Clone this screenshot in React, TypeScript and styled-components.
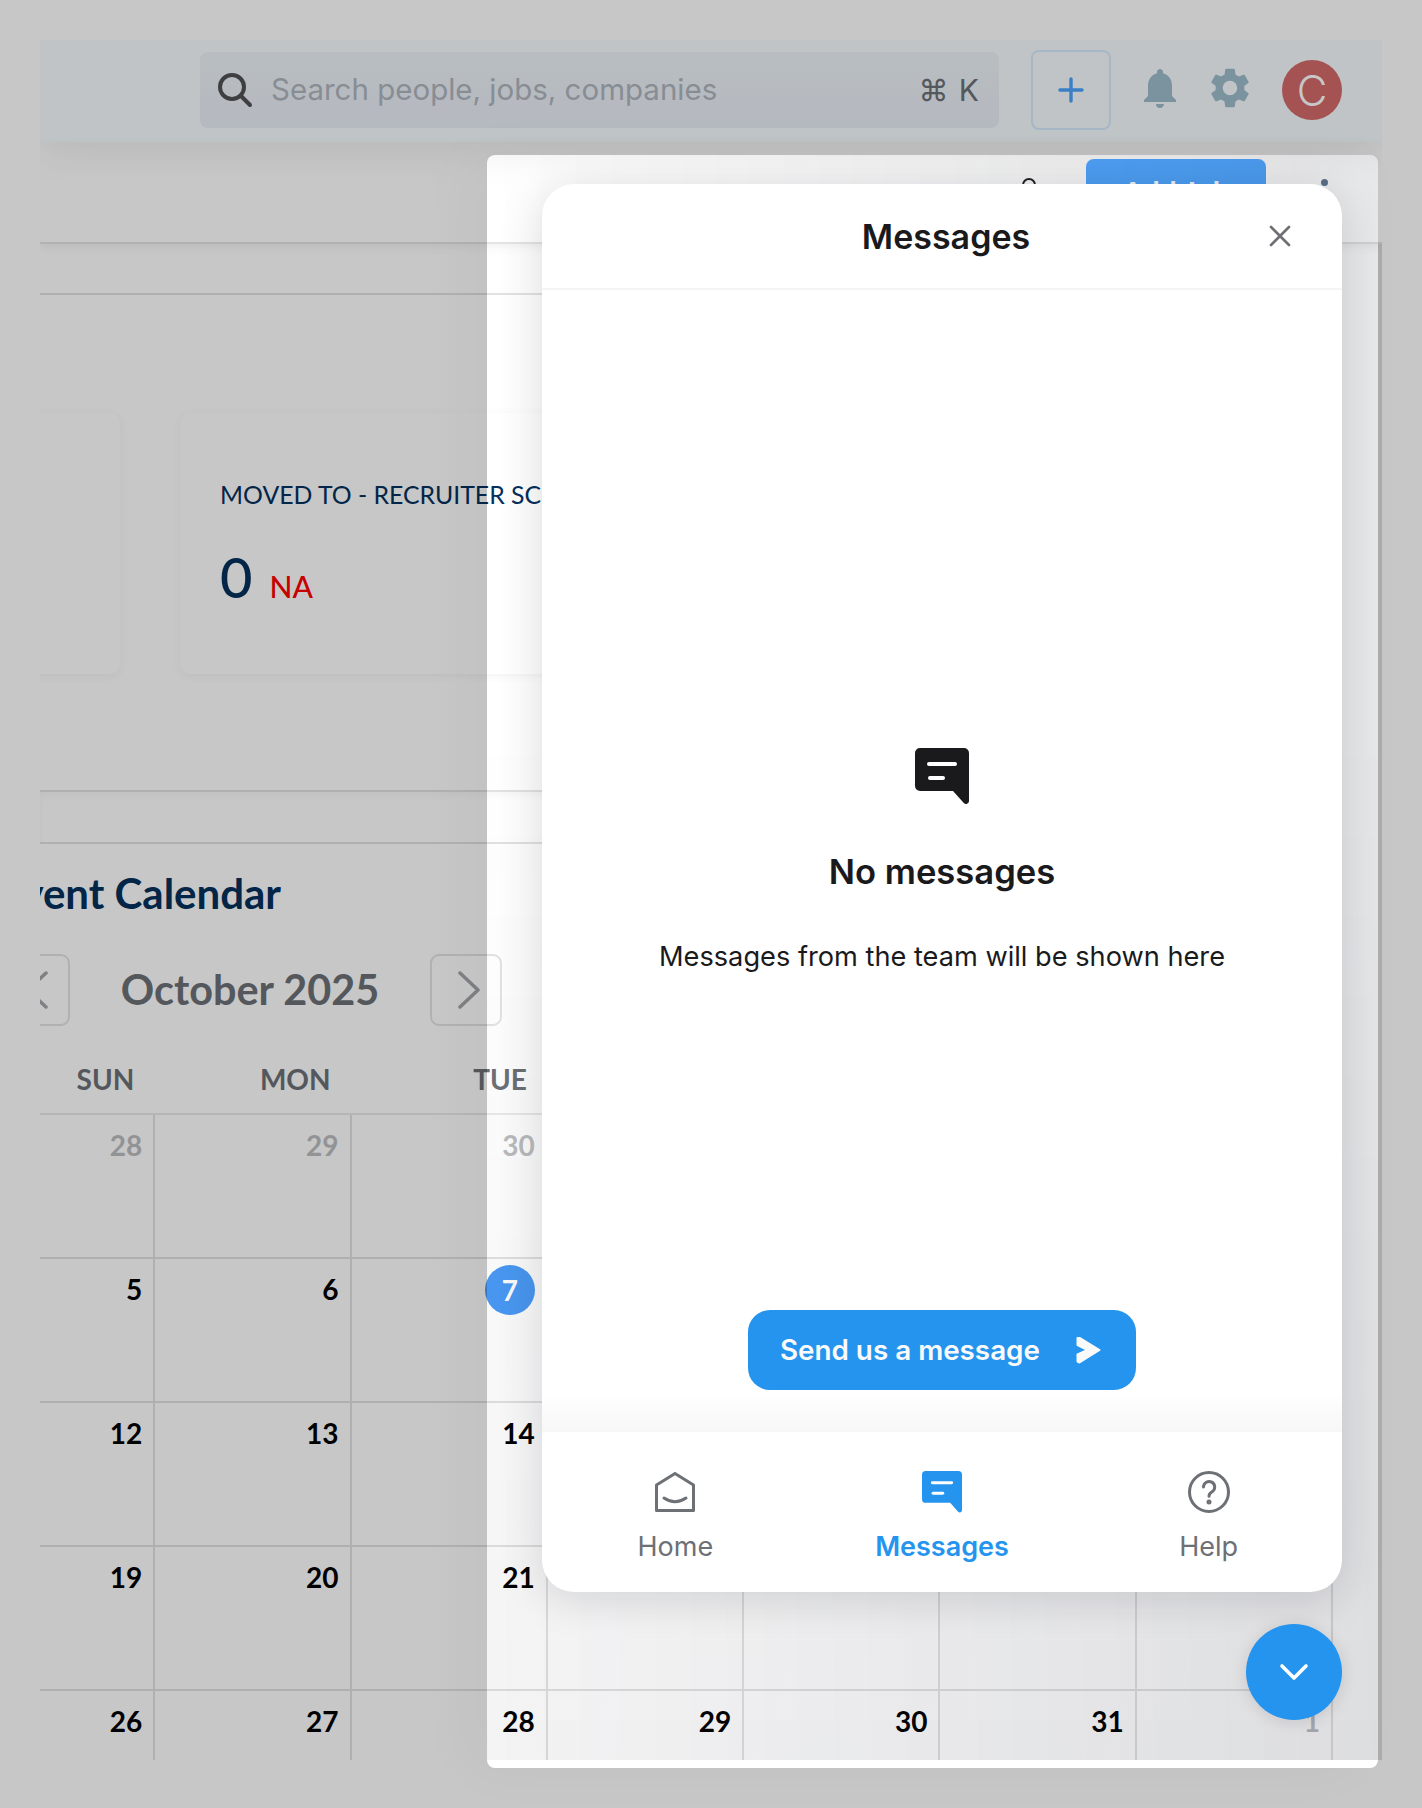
import React from 'react';
import styled, { createGlobalStyle } from 'styled-components';
import { MdNotifications, MdSettings } from 'react-icons/md';

const GlobalStyle = createGlobalStyle`
  html, body {
    margin: 0;
    padding: 0;
    background: #fff;
    overflow: hidden;
  }
`;

const Root = styled.div`
  position: relative;
  width: 1422px;
  height: 1808px;
  overflow: hidden;
  font-family: Lato, "Open Sans", sans-serif;
`;

const Frame = styled.div`
  width: 1342px;
  height: 1720px;
  margin: 40px 0 0 40px;
  overflow: hidden;
  display: flex;
  flex-direction: column;
`;

const TopBar = styled.header`
  position: relative;
  z-index: 2;
  flex: none;
  height: 102px;
  box-sizing: border-box;
  padding: 0 39px 2px 160px;
  display: flex;
  align-items: center;
  background: #f6fcff;
  box-shadow: 0 2px 46px rgba(0, 0, 0, 0.1);
`;

const SearchBox = styled.div`
  width: 799px;
  height: 76px;
  box-sizing: border-box;
  padding: 0 20px 0 17px;
  display: flex;
  align-items: center;
  border-radius: 8px;
  background: linear-gradient(#edf3f8, #e8edf6);
`;

const Placeholder = styled.span`
  flex: 1;
  margin: 0 0 2px 18px;
  font-family: Inter, sans-serif;
  font-size: 29.5px;
  color: #aeb5bd;
`;

const Shortcut = styled.span`
  font-family: Inter, "DejaVu Sans", sans-serif;
  font-size: 30px;
  color: #6c7176;
  word-spacing: 2px;
`;

const PlusButton = styled.button`
  width: 80px;
  height: 80px;
  margin: 0 25px 0 32px;
  padding: 0;
  display: flex;
  align-items: center;
  justify-content: center;
  background: transparent;
  border: 2px solid #d5ecff;
  border-radius: 8px;
`;

const BarIcon = styled.span`
  display: flex;
  margin: 0 22px 4px 0;
  color: #9ebbcc;
`;

const Avatar = styled.div`
  width: 60px;
  height: 60px;
  margin-left: 6px;
  border-radius: 50%;
  background: #d26a6a;
  color: #fff;
  font-size: 42px;
  font-family: Inter, sans-serif;
  font-weight: 300;
  display: flex;
  align-items: center;
  justify-content: center;
`;

const SubHeader = styled.div`
  flex: none;
  height: 102px;
  box-sizing: border-box;
  padding: 17px 58px 0 0;
  display: flex;
  align-items: flex-start;
  justify-content: flex-end;
  border-bottom: 2px solid #e4e4e4;
  box-shadow: 0 3px 10px rgba(0, 0, 0, 0.06);
  position: relative;
  z-index: 3;
`;

const PersonMark = styled.span`
  width: 10px;
  height: 10px;
  margin: 19px 50px 0 0;
  border: 2.5px solid #222;
  border-radius: 50%;
`;

const AddButton = styled.div`
  width: 180px;
  height: 66px;
  margin-right: 55px;
  border-radius: 8px;
  background: #50a6ff;
  color: #fff;
  font-size: 30px;
  font-weight: 700;
  line-height: 66px;
  text-align: center;
`;

const KebabDot = styled.span`
  width: 7px;
  height: 7px;
  margin: 20px -4px 0 0;
  border-radius: 50%;
  background: #5f7890;
`;

const Content = styled.main`
  flex: 1;
  min-height: 0;
  border-right: 4px solid #dedede;
  overflow: hidden;
`;

const TabStrip = styled.div`
  height: 49px;
  margin-right: 60px;
  border-bottom: 2px solid #e2e2e2;
`;

const CardRow = styled.section`
  display: flex;
  gap: 60px;
  margin-left: -240px;
  padding: 118px 0 116px;
`;

const Card = styled.div<{ $wide?: boolean }>`
  flex: none;
  width: ${(p) => (p.$wide ? 460 : 320)}px;
  height: 261px;
  box-sizing: border-box;
  padding: 66px 0 0 40px;
  border-radius: 10px;
  background: #fff;
  box-shadow: 0 2px 10px rgba(0, 0, 0, 0.05);
  white-space: nowrap;
`;

const CardTitle = styled.div`
  font-size: 24.8px;
  line-height: 32px;
  color: #05305c;
`;

const CardValue = styled.div`
  margin-top: 32px;
  display: flex;
  align-items: baseline;
  gap: 17px;
  font-size: 56px;
  line-height: 68px;
  font-weight: 500;
  color: #05305c;
`;

const CardDelta = styled.span`
  font-size: 30px;
  color: #ff0000;
`;

const Divider = styled.div`
  height: 50px;
  margin-right: 60px;
  border-top: 2px solid #e2e2e2;
  border-bottom: 2px solid #e2e2e2;
  box-shadow: inset 0 4px 6px rgba(0, 0, 0, 0.03);
`;

const CalendarTitle = styled.h2`
  margin: 24px 0 0 -42px;
  font-size: 42px;
  line-height: 50px;
  font-weight: 700;
  color: #05305c;
  white-space: nowrap;
`;

const MonthBar = styled.div`
  height: 72px;
  margin: 36px 0 1px -42px;
  display: flex;
  align-items: center;
`;

const NavButton = styled.button`
  flex: none;
  width: 72px;
  height: 72px;
  padding: 0 0 0 5px;
  display: flex;
  align-items: center;
  justify-content: center;
  background: transparent;
  border: 2px solid #e3e3e3;
  border-radius: 9px;
  color: #a2a5a9;
`;

const MonthTitle = styled.div`
  width: 360px;
  padding-bottom: 3px;
  font-size: 41.4px;
  font-weight: 700;
  color: #6c7176;
  text-align: center;
`;

const Calendar = styled.div`
  width: 1374px;
  margin-left: -81px;
`;

const WeekHead = styled.div`
  height: 88px;
  display: grid;
  grid-template-columns: repeat(7, 1fr);
  border-bottom: 2px solid #eaeaea;
  box-sizing: border-box;
`;

const WeekDay = styled.div`
  padding: 35px 21px 0 0;
  font-size: 28px;
  line-height: 34px;
  font-weight: 700;
  color: #6c7176;
  text-align: right;
`;

const Weeks = styled.div`
  display: grid;
  grid-template-columns: repeat(7, 1fr);
  grid-auto-rows: 144px;
`;

const DayCell = styled.div`
  box-sizing: border-box;
  padding: 0 11px 0 0;
  display: flex;
  align-items: flex-start;
  justify-content: flex-end;
  border-right: 2px solid #e2e2e2;
  border-bottom: 2px solid #e2e2e2;
`;

const DayNumber = styled.span<{ $muted?: boolean; $today?: boolean }>`
  font-size: 28px;
  font-weight: 700;
  color: ${(p) => (p.$today ? '#fff' : p.$muted ? '#bcbdbf' : '#000')};
  ${(p) =>
    p.$today
      ? `
    width: 50px;
    height: 50px;
    margin-top: 6px;
    border-radius: 50%;
    background: #4a9af5;
    display: flex;
    align-items: center;
    justify-content: center;
  `
      : `
    margin-top: 10px;
    line-height: 40px;
  `}
`;

const Panel = styled.div`
  position: absolute;
  z-index: 3;
  left: 487px;
  top: 155px;
  width: 891px;
  height: 1613px;
  border-radius: 8px;
  background-image: linear-gradient(90deg, rgba(22, 26, 42, 0) 0%, rgba(22, 26, 42, 0.02) 20%, rgba(22, 26, 42, 0.1) 100%),
    linear-gradient(180deg, rgba(22, 26, 42, 0) 35%, rgba(22, 26, 42, 0.05) 100%);
  background-size: 100% 1605px;
  background-repeat: no-repeat;
  box-shadow: 0 0 0 4000px rgba(0, 0, 0, 0.22), -20px 0 60px rgba(0, 0, 0, 0.03);
`;

const Widget = styled.section`
  position: absolute;
  z-index: 4;
  left: 542px;
  top: 184px;
  width: 800px;
  height: 1408px;
  display: flex;
  flex-direction: column;
  overflow: hidden;
  border-radius: 32px;
  background: #fff;
  box-shadow: 0 6px 46px rgba(9, 14, 21, 0.14);
  font-family: Inter, sans-serif;
  color: #1a1a1d;
`;

const WidgetHeader = styled.header`
  flex: none;
  height: 106px;
  box-sizing: border-box;
  padding: 0 51px 0 56px;
  display: flex;
  align-items: center;
  justify-content: space-between;
  border-bottom: 2px solid #f4f4f4;
`;

const HeaderSpacer = styled.span`
  width: 22px;
`;

const WidgetTitle = styled.h1`
  margin: 0 0 0 3px;
  font-size: 34px;
  font-weight: 600;
`;

const WidgetBody = styled.div`
  flex: 1;
  min-height: 0;
  display: flex;
  flex-direction: column;
`;

const EmptyState = styled.div`
  flex: 1;
  padding-top: 125px;
  box-sizing: border-box;
  display: flex;
  flex-direction: column;
  align-items: center;
  justify-content: center;
`;

const EmptyTitle = styled.h2`
  margin: 44px 0 0;
  font-size: 34.6px;
  line-height: 46px;
  font-weight: 600;
`;

const EmptyText = styled.p`
  margin: 43px 0 0;
  font-size: 27.2px;
  line-height: 40px;
`;

const ActionArea = styled.div`
  flex: none;
  height: 122px;
  display: flex;
  justify-content: center;
  background: linear-gradient(#fff 68%, #f7f7f7 100%);
`;

const SendButton = styled.button`
  width: 388px;
  height: 80px;
  padding: 0 35px 0 32px;
  display: flex;
  align-items: center;
  justify-content: space-between;
  border: 0;
  border-radius: 22px;
  background: #2594ee;
  color: #fafafa;
  font-family: Inter, sans-serif;
  font-size: 27.8px;
  font-weight: 600;
`;

const WidgetNav = styled.nav`
  flex: none;
  height: 160px;
  display: grid;
  grid-template-columns: repeat(3, 1fr);
`;

const NavItem = styled.div<{ $active?: boolean }>`
  padding-top: 39px;
  display: flex;
  flex-direction: column;
  align-items: center;
  gap: 16px;
  font-size: 27px;
  line-height: 36px;
  font-weight: ${(p) => (p.$active ? 600 : 400)};
  color: ${(p) => (p.$active ? '#2594ee' : '#6d7074')};
`;

const NavIcon = styled.span`
  height: 42px;
  display: flex;
  align-items: center;
`;

const Launcher = styled.button`
  position: absolute;
  z-index: 4;
  left: 1246px;
  top: 1624px;
  width: 96px;
  height: 96px;
  padding: 0;
  display: flex;
  align-items: center;
  justify-content: center;
  border: 0;
  border-radius: 50%;
  background: #2594ee;
  box-shadow: 0 2px 16px rgba(9, 14, 21, 0.12);
`;

const prevMonth = [28, 29, 30];
const weeks: number[][] = [
  [28, 29, 30, 1, 2, 3, 4],
  [5, 6, 7, 8, 9, 10, 11],
  [12, 13, 14, 15, 16, 17, 18],
  [19, 20, 21, 22, 23, 24, 25],
  [26, 27, 28, 29, 30, 31, 1],
];
const weekDays = ['SUN', 'MON', 'TUE', 'WED', 'THU', 'FRI', 'SAT'];

const isMuted = (week: number, day: number) =>
  (week === 0 && prevMonth.includes(day)) || (week === 4 && day === 1);

const SearchIcon = () => (
  <svg width="36" height="36" viewBox="0 0 36 36" fill="none" stroke="#4f5153" strokeWidth="4" strokeLinecap="round">
    <circle cx="15" cy="15" r="12" />
    <path d="M24 24 L33 33" />
  </svg>
);

const BubbleIcon = ({ size, color }: { size: number; color: string }) => (
  <svg width={size} height={size * (56 / 54)} viewBox="0 0 54 56">
    <path
      d="M5 0 H49 a5 5 0 0 1 5 5 V53 a3 3 0 0 1 -5.2 2 L38 43 H5 a5 5 0 0 1 -5 -5 V5 a5 5 0 0 1 5 -5 Z"
      fill={color}
    />
    <rect x="12" y="14" width="30" height="4" rx="2" fill="#fff" />
    <rect x="13" y="28" width="17" height="4" rx="2" fill="#fff" />
  </svg>
);

const HomeIcon = () => (
  <svg width="40" height="40" viewBox="0 0 40 40" fill="none" stroke="#6d7074" strokeWidth="3" strokeLinecap="round" strokeLinejoin="round">
    <path d="M20 1.5 L38.5 13 V38.5 H1.5 V13 Z" />
    <path d="M9 26 Q20 33.5 31 26" />
  </svg>
);

const HelpIcon = () => (
  <svg width="42" height="42" viewBox="0 0 42 42" fill="none" stroke="#6d7074" strokeWidth="3" strokeLinecap="round">
    <circle cx="21" cy="21" r="19.5" />
    <path d="M15.5 16 a5.6 5.6 0 1 1 8.6 4.8 c-1.9 1.1 -3.1 2.2 -3.1 4.4" />
    <circle cx="21" cy="31" r="1" fill="#6d7074" />
  </svg>
);

const SendIcon = () => (
  <svg width="25" height="28" viewBox="0 0 25 28" fill="#fafafa" stroke="#fafafa" strokeWidth="2" strokeLinejoin="round">
    <path d="M1.5 2 L4 2 L23.5 14 L3.5 26.5 L1.5 25.5 V18.5 L11.5 14 L1.5 9 Z" />
  </svg>
);

const App: React.FC = () => {
  return (
    <Root>
      <GlobalStyle />
      <Frame>
        <TopBar>
          <SearchBox>
            <SearchIcon />
            <Placeholder>Search people, jobs, companies</Placeholder>
            <Shortcut>⌘ K</Shortcut>
          </SearchBox>
          <PlusButton>
            <svg width="26" height="26" viewBox="0 0 26 26" stroke="#4aa3ff" strokeWidth="3.4" strokeLinecap="round">
              <path d="M13 2 V24 M2 13 H24" />
            </svg>
          </PlusButton>
          <BarIcon>
            <MdNotifications size={48} />
          </BarIcon>
          <BarIcon>
            <MdSettings size={48} />
          </BarIcon>
          <Avatar>C</Avatar>
        </TopBar>
        <SubHeader>
          <PersonMark />
          <AddButton>Add Job</AddButton>
          <KebabDot />
        </SubHeader>
        <Content>
          <TabStrip />
          <CardRow>
            <Card />
            <Card $wide>
              <CardTitle>MOVED TO - RECRUITER SCREEN</CardTitle>
              <CardValue>
                0<CardDelta>NA</CardDelta>
              </CardValue>
            </Card>
          </CardRow>
          <Divider />
          <CalendarTitle>Event Calendar</CalendarTitle>
          <MonthBar>
            <NavButton>
              <svg width="22" height="38" viewBox="0 0 22 38" fill="none" stroke="currentColor" strokeWidth="3.5" strokeLinecap="round" strokeLinejoin="round">
                <path d="M20 2 L2 19 L20 36" />
              </svg>
            </NavButton>
            <MonthTitle>October 2025</MonthTitle>
            <NavButton>
              <svg width="22" height="38" viewBox="0 0 22 38" fill="none" stroke="currentColor" strokeWidth="3.5" strokeLinecap="round" strokeLinejoin="round">
                <path d="M2 2 L20 19 L2 36" />
              </svg>
            </NavButton>
          </MonthBar>
          <Calendar>
            <WeekHead>
              {weekDays.map((d) => (
                <WeekDay key={d}>{d}</WeekDay>
              ))}
            </WeekHead>
            <Weeks>
              {weeks.map((week, w) =>
                week.map((day, i) => (
                  <DayCell key={`${w}-${i}`}>
                    <DayNumber $muted={isMuted(w, day)} $today={w === 1 && day === 7}>
                      {day}
                    </DayNumber>
                  </DayCell>
                )),
              )}
            </Weeks>
          </Calendar>
        </Content>
      </Frame>

      <Panel />

      <Widget>
        <WidgetHeader>
          <HeaderSpacer />
          <WidgetTitle>Messages</WidgetTitle>
          <svg width="22" height="22" viewBox="0 0 22 22" stroke="#6d6f72" strokeWidth="2.6" strokeLinecap="round">
            <path d="M2 2 L20 20 M20 2 L2 20" />
          </svg>
        </WidgetHeader>
        <WidgetBody>
          <EmptyState>
            <BubbleIcon size={54} color="#1a1a1d" />
            <EmptyTitle>No messages</EmptyTitle>
            <EmptyText>Messages from the team will be shown here</EmptyText>
          </EmptyState>
          <ActionArea>
            <SendButton>
              Send us a message
              <SendIcon />
            </SendButton>
          </ActionArea>
        </WidgetBody>
        <WidgetNav>
          <NavItem>
            <NavIcon>
              <HomeIcon />
            </NavIcon>
            Home
          </NavItem>
          <NavItem $active>
            <NavIcon>
              <BubbleIcon size={40} color="#2594ee" />
            </NavIcon>
            Messages
          </NavItem>
          <NavItem>
            <NavIcon>
              <HelpIcon />
            </NavIcon>
            Help
          </NavItem>
        </WidgetNav>
      </Widget>

      <Launcher>
        <svg width="30" height="18" viewBox="0 0 30 18" fill="none" stroke="#fff" strokeWidth="3.6" strokeLinecap="round" strokeLinejoin="round">
          <path d="M3 3 L15 15 L27 3" />
        </svg>
      </Launcher>
    </Root>
  );
};

export default App;
